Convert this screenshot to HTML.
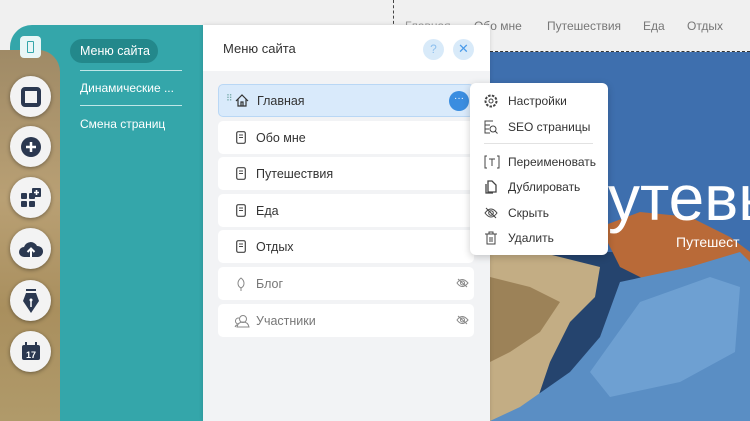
<!DOCTYPE html>
<html><head><meta charset="utf-8"><style>
*{margin:0;padding:0;box-sizing:border-box}
body{width:750px;height:421px;overflow:hidden;position:relative;background:#f0f0f0;font-family:"Liberation Sans","Noto Sans CJK SC",sans-serif}
.abs{position:absolute}
.nav{position:absolute;top:19px;font-size:12px;color:#777}
.circ{position:absolute;left:10px;width:41px;height:41px;border-radius:50%;background:#f3f3f3;box-shadow:0 1px 4px rgba(0,0,0,.4);display:flex;align-items:center;justify-content:center}
.row{position:absolute;left:218px;width:256px;height:33px;background:#fff;border-radius:5px;font-size:12.5px;color:#333;display:flex;align-items:center}
.row .ic{position:absolute;left:18px;top:10px}
.row span{position:absolute;left:38px}
.mi{position:absolute;left:484px;font-size:12px;color:#333}
.mi svg{position:absolute;left:0;top:0}
.mi span{position:absolute;left:24px;top:0;white-space:nowrap}
</style></head><body>
<svg class="abs" style="left:490px;top:52px" width="260" height="369">
<rect width="260" height="369" fill="#3e6fae"/>
<rect y="200" width="260" height="169" fill="#25446e"/>
<polygon points="0,200 30,195 70,205 110,215 105,245 80,270 60,310 40,369 0,369" fill="#c3ad84"/>
<polygon points="0,225 40,235 70,250 50,280 20,300 0,310" fill="#9c8258"/>
<polygon points="110,175 150,160 200,165 240,185 260,200 260,240 210,225 160,230 130,215" fill="#b96a38"/>
<polygon points="130,230 200,215 250,200 260,210 260,369 0,369 30,355 80,320 110,285" fill="#5a8ec4"/>
<polygon points="150,250 220,225 250,235 245,300 190,330 120,345 100,320" fill="#6ea0d2"/>
<text x="118" y="168" font-size="64" fill="#fff" font-family="Liberation Sans">утевы</text>
<text x="186" y="195" font-size="14" fill="#fff" font-family="Liberation Sans">Путешест</text>
</svg>
<div class="abs" style="left:393px;top:0;height:50px;border-left:1px dashed #444"></div>
<div class="abs" style="left:490px;top:51px;width:260px;border-top:1px dashed #333"></div>
<div class="nav" style="left:405px;color:#999">Главная</div>
<div class="nav" style="left:474px">Обо мне</div>
<div class="nav" style="left:547px">Путешествия</div>
<div class="nav" style="left:643px">Еда</div>
<div class="nav" style="left:687px">Отдых</div>
<div class="abs" style="left:10px;top:25px;width:194px;height:396px;background:#34a6aa;border-top-left-radius:22px"></div>
<div class="abs" style="left:0;top:50px;width:60px;height:371px;background:linear-gradient(180deg,#9f8a66,#b9a074 40%,#a98f5e 70%,#b09a6a);border-top-right-radius:22px"></div>
<div class="abs" style="left:20px;top:36px;width:21px;height:22px;background:#e8f6f6;border-radius:4px"><div style="margin:5px 7px;width:7px;height:12px;border:1.5px solid #34a6aa;border-radius:1px"></div></div>
<div class="abs" style="left:70px;top:39px;width:88px;height:24px;background:#23888b;border-radius:12px;color:#fff;font-size:12.5px;line-height:24px;padding-left:10px">Меню сайта</div>
<div class="abs" style="left:80px;top:70px;width:102px;border-top:1px solid #bfe6e7"></div>
<div class="abs" style="left:80px;top:81px;color:#fff;font-size:12px">Динамические ...</div>
<div class="abs" style="left:80px;top:105px;width:102px;border-top:1px solid #bfe6e7"></div>
<div class="abs" style="left:80px;top:117px;color:#fff;font-size:12px">Смена страниц</div>
<div class="circ" style="top:76px"><div style="width:20px;height:20px;border:4px solid #2b3850;border-radius:4px"></div></div>
<div class="circ" style="top:126px"><svg width="22" height="22"><circle cx="11" cy="11" r="10" fill="#2b3850"/><path d="M11 6v10M6 11h10" stroke="#fff" stroke-width="2.5"/></svg></div>
<div class="circ" style="top:177px"><svg width="22" height="22" fill="#2b3850"><rect x="1" y="6" width="6" height="6" rx="1"/><rect x="9" y="6" width="6" height="6" rx="1"/><rect x="1" y="14" width="6" height="6" rx="1"/><rect x="9" y="14" width="6" height="6" rx="1"/><rect x="12" y="1" width="9" height="9" rx="1"/><path d="M16.5 3v5M14 5.5h5" stroke="#fff" stroke-width="1.6"/></svg></div>
<div class="circ" style="top:228px"><svg width="24" height="20"><path d="M5 18a5 5 0 0 1 0-10 7 7 0 0 1 13-1 5 5 0 0 1 1 11z" fill="#2b3850"/><path d="M12 18v-8M8.5 13l3.5-3.5 3.5 3.5" stroke="#fff" stroke-width="2" fill="none"/></svg></div>
<div class="circ" style="top:280px"><svg width="18" height="24"><rect x="4" y="0" width="10" height="2" fill="#2b3850"/><path d="M4 4h10l3 8-8 12-8-12z" fill="#2b3850"/><path d="M9 10v8" stroke="#fff" stroke-width="1.5"/><circle cx="9" cy="11" r="1.5" fill="#fff"/></svg></div>
<div class="circ" style="top:331px"><svg width="22" height="22"><rect x="2" y="4" width="18" height="15" rx="2" fill="#2b3850"/><rect x="5" y="1" width="2" height="5" fill="#2b3850"/><rect x="15" y="1" width="2" height="5" fill="#2b3850"/><text x="11" y="17" font-size="9" fill="#fff" text-anchor="middle" font-family="Liberation Sans" font-weight="bold">17</text></svg></div>
<div class="abs" style="left:203px;top:25px;width:287px;height:396px;background:#f2f3f5;box-shadow:0 0 4px rgba(0,0,0,.15)"></div>
<div class="abs" style="left:203px;top:25px;width:287px;height:46px;background:#fff;border-top-right-radius:6px"></div>
<div class="abs" style="left:223px;top:41px;font-size:13px;color:#333">Меню сайта</div>
<div class="abs" style="left:423px;top:39px;width:21px;height:21px;border-radius:50%;background:#d8eaf9;color:#8ec0ee;font-size:12px;text-align:center;line-height:21px">?</div>
<div class="abs" style="left:453px;top:39px;width:21px;height:21px;border-radius:50%;background:#d8eaf9;color:#4a9bea;font-size:13px;text-align:center;line-height:20px">✕</div>
<div class="row" style="top:84px;background:#d9eafb;border:1px solid #b9d7f5"><span style="left:7px;top:8px;color:#7aa;font-size:9px">⠿</span><svg class="ic" style="left:16px;top:9px" width="14" height="13"><path d="M1 7L7 1l6 6M3 5v7h8V5M6 12V8h2v4" stroke="#333" stroke-width="1.2" fill="none"/></svg><span>Главная</span><div style="position:absolute;left:230px;top:6px;width:20px;height:20px;border-radius:50%;background:#3a8de0;color:#fff;font-size:10px;text-align:center;line-height:15px">···</div></div>
<div class="row" style="top:121px"><svg class="ic" width="10" height="13"><rect x=".7" y=".7" width="8.6" height="11.6" rx="1.5" stroke="#444" stroke-width="1.2" fill="none"/><path d="M3 4h4M3 6.5h4" stroke="#444"/></svg><span>Обо мне</span></div>
<div class="row" style="top:157px"><svg class="ic" width="10" height="13"><rect x=".7" y=".7" width="8.6" height="11.6" rx="1.5" stroke="#444" stroke-width="1.2" fill="none"/><path d="M3 4h4M3 6.5h4" stroke="#444"/></svg><span>Путешествия</span></div>
<div class="row" style="top:194px"><svg class="ic" width="10" height="13"><rect x=".7" y=".7" width="8.6" height="11.6" rx="1.5" stroke="#444" stroke-width="1.2" fill="none"/><path d="M3 4h4M3 6.5h4" stroke="#444"/></svg><span>Еда</span></div>
<div class="row" style="top:230px"><svg class="ic" width="10" height="13"><rect x=".7" y=".7" width="8.6" height="11.6" rx="1.5" stroke="#444" stroke-width="1.2" fill="none"/><path d="M3 4h4M3 6.5h4" stroke="#444"/></svg><span>Отдых</span></div>
<div class="row" style="top:267px;color:#777"><svg class="ic" width="10" height="14"><path d="M5 1C1 4 1 9 5 11 9 9 9 4 5 1zM5 11v3" stroke="#888" fill="none"/></svg><span>Блог</span><svg style="position:absolute;left:238px;top:11px" width="13" height="10"><path d="M1 5q5-7 11 0q-6 7-11 0zM2 1l9 8" stroke="#888" fill="none"/><circle cx="6.5" cy="5" r="2" stroke="#888" fill="none"/></svg></div>
<div class="row" style="top:304px;color:#777"><svg class="ic" style="left:16px" width="16" height="14"><circle cx="9" cy="5" r="3.5" stroke="#888" fill="none"/><path d="M3 13q1-5 6-5t6 5zM5 4a3 3 0 0 0-1 6q-2 1-3 3" stroke="#888" fill="none"/></svg><span>Участники</span><svg style="position:absolute;left:238px;top:11px" width="13" height="10"><path d="M1 5q5-7 11 0q-6 7-11 0zM2 1l9 8" stroke="#888" fill="none"/><circle cx="6.5" cy="5" r="2" stroke="#888" fill="none"/></svg></div>
<div class="abs" style="left:470px;top:83px;width:138px;height:172px;background:#fff;border-radius:6px;box-shadow:0 2px 8px rgba(0,0,0,.2)"></div>
<div class="abs" style="left:484px;top:143px;width:109px;border-top:1px solid #e2e2e2"></div>
<div class="mi" style="top:94px"><svg width="14" height="14"><circle cx="7" cy="7" r="5.5" stroke="#444" stroke-dasharray="2.5 1.3" stroke-width="2" fill="none"/><circle cx="7" cy="7" r="2" stroke="#444" fill="none"/></svg><span>Настройки</span></div>
<div class="mi" style="top:120px"><svg width="14" height="14"><path d="M9 1H1v12h5M1 5h5M1 9h4" stroke="#444" fill="none"/><circle cx="9" cy="9" r="3" stroke="#444" fill="none"/><path d="M11 11l2.5 2.5" stroke="#444"/></svg><span>SEO страницы</span></div>
<div class="mi" style="top:155px"><svg width="16" height="14"><path d="M3 1H1v12h2M13 1h2v12h-2M5 4h6M8 4v7" stroke="#444" fill="none"/></svg><span>Переименовать</span></div>
<div class="mi" style="top:180px"><svg width="14" height="14"><path d="M4 1h4l4 4v7H4zM2 4v9h7" stroke="#444" stroke-width="1.3" fill="none"/></svg><span>Дублировать</span></div>
<div class="mi" style="top:206px"><svg width="14" height="14"><path d="M1 7q6-8 12 0q-6 8-12 0zM2 2l10 10" stroke="#444" fill="none"/><circle cx="7" cy="7" r="2.3" stroke="#444" fill="none"/></svg><span>Скрыть</span></div>
<div class="mi" style="top:231px"><svg width="14" height="14"><path d="M1 3h12M5 3V1h4v2M3 3v10h8V3M6 6v5M8 6v5" stroke="#444" fill="none"/></svg><span>Удалить</span></div>
</body></html>
